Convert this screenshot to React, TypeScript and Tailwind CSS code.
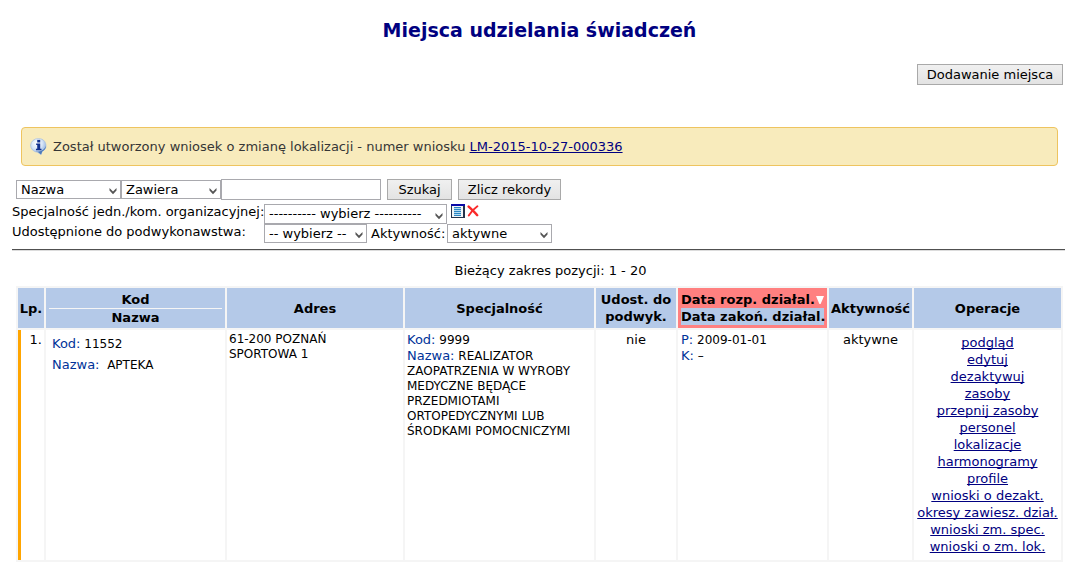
import type { ReactNode } from "react";

const operations = [
  "podgląd",
  "edytuj",
  "dezaktywuj",
  "zasoby",
  "przepnij zasoby",
  "personel",
  "lokalizacje",
  "harmonogramy",
  "profile",
  "wnioski o dezakt.",
  "okresy zawiesz. dział.",
  "wnioski zm. spec.",
  "wnioski o zm. lok.",
];

const linkClass = "text-[#000080] underline [text-decoration-skip-ink:none]";
const buttonClass =
  "h-[21px] border border-[#a9a9a9] bg-linear-to-b from-[#f0f0f0] to-[#e3e3e3] text-center leading-4";

type SelectProps = {
  id?: string;
  label?: string;
  options: string[];
  className: string;
};

function Select({ id, label, options, className }: SelectProps) {
  return (
    <span className={`relative inline-flex shrink-0 ${className}`}>
      <select
        id={id}
        aria-label={label}
        className="h-full w-full appearance-none border border-[#a9a9ae] bg-white pl-1 leading-4"
      >
        {options.map((option) => (
          <option key={option}>{option}</option>
        ))}
      </select>
      <svg className="pointer-events-none absolute right-1 bottom-1 h-2 w-2" viewBox="0 0 8 8">
        <path d="M0.5 1 L4 4.5 L7.5 1 V3.6 L4 7.2 L0.5 3.6 Z" fill="#555" />
      </svg>
    </span>
  );
}

function InfoIcon() {
  return (
    <svg className="h-[17px] w-[17px] shrink-0" viewBox="0 0 16 16" aria-hidden="true">
      <defs>
        <radialGradient id="bubble" cx="0.4" cy="0.3" r="0.75">
          <stop offset="0" stopColor="#ffffff" />
          <stop offset="0.5" stopColor="#d5e3f6" />
          <stop offset="1" stopColor="#7fa4d8" />
        </radialGradient>
      </defs>
      <path
        d="M8 0.6a7 6.4 0 0 1 3.4 12L10.4 15.6 7.2 13.4A7 6.4 0 0 1 8 0.6z"
        fill="url(#bubble)"
        stroke="#a9bfe0"
        strokeWidth="0.7"
      />
      <path d="M5 12.8C10 13.4 13.6 11.4 15 7.4C15 10 13.6 11.8 11.5 12.7L10.4 15.6 7.8 13.4z" fill="#4d79b8" />
      <path d="M6.8 1.8h2.8v2.4H6.8z" fill="#12308f" />
      <path d="M5.8 5.2h3.8v4.8h1.2v1.6H5.6V10h1.2V6.6h-1z" fill="#12308f" />
    </svg>
  );
}

function ListIcon() {
  return (
    <svg className="h-3.5 w-3.5" viewBox="0 0 14 14" shapeRendering="crispEdges" aria-hidden="true">
      <path d="M0 0h14v14H0z" fill="#22344c" />
      <path d="M0 0h14v2H0z" fill="#0a0aa8" />
      <path d="M1 2h11v11H1z" fill="#f2f6f8" />
      <path d="M3 3h7v9H3z" fill="#b4dcf0" />
      <path d="M3 3h7v1H3zM3 5h7v1H3zM3 7h7v1H3zM3 9h7v1H3zM3 11h7v1H3z" fill="#2a86c4" />
    </svg>
  );
}

function ClearIcon() {
  return (
    <svg className="h-3 w-3" viewBox="0 0 12 12" aria-hidden="true">
      <path d="M1.6 1.6C4 3.8 7.5 7 10.2 10.2" stroke="#fa2a2a" strokeWidth="2.4" fill="none" strokeLinecap="round" />
      <path d="M10.4 1.2C7 3.6 4 7 1.8 10.4" stroke="#fa2a2a" strokeWidth="1.9" fill="none" strokeLinecap="round" />
    </svg>
  );
}

function Label({ children }: { children: ReactNode }) {
  return <span className="inline-block text-[13px] leading-4 text-[#003399]">{children}</span>;
}

export default function App() {
  return (
    <main className="bg-white pr-3.5 pb-2 pl-3 font-['DejaVu_Sans',Verdana,sans-serif] text-[13px] text-black">
      <h1 className="pt-4 pl-0.5 text-center text-[19px] leading-7 font-bold text-[#000080]">
        Miejsca udzielania świadczeń
      </h1>

      <div className="mt-5 mr-0.5 flex justify-end">
        <button type="button" className={`${buttonClass} w-[146px]`}>
          Dodawanie miejsca
        </button>
      </div>

      <div className="mt-[42px] mr-[7px] ml-[9px] flex h-[39px] items-center gap-1.5 rounded-[4px] border border-[#eec45f] bg-[#f8ebbc] pl-2 text-[#363636]">
        <InfoIcon />
        <p>
          Został utworzony wniosek o zmianę lokalizacji - numer wniosku{" "}
          <a href="#wniosek" className={linkClass}>
            LM-2015-10-27-000336
          </a>
        </p>
      </div>

      <form className="mt-[13px]" onSubmit={(e) => e.preventDefault()}>
        <div className="flex items-center pl-1">
          <Select label="Pole" options={["Nazwa", "Kod"]} className="h-[19px] w-[105px]" />
          <Select label="Warunek" options={["Zawiera", "Równe"]} className="h-[19px] w-[100px]" />
          <input type="text" aria-label="Szukana wartość" className="h-[21px] w-40 border border-[#a9a9ae] px-1" />
          <button type="submit" className={`${buttonClass} ml-1.5 w-[65px]`}>
            Szukaj
          </button>
          <button type="button" className={`${buttonClass} ml-1.5 w-[103px]`}>
            Zlicz rekordy
          </button>
        </div>

        <div className="mt-1 flex items-start">
          <label htmlFor="specjalnosc" className="w-[252px] shrink-0 leading-4 whitespace-nowrap">
            Specjalność jedn./kom. organizacyjnej:
          </label>
          <Select
            id="specjalnosc"
            options={["---------- wybierz ----------"]}
            className="h-5 w-[183px]"
          />
          <button type="button" aria-label="Wybierz z listy" className="ml-1">
            <ListIcon />
          </button>
          <button type="button" aria-label="Wyczyść" className="ml-0.5 pt-px">
            <ClearIcon />
          </button>
        </div>

        <div className="flex items-start">
          <label htmlFor="podwykonawstwo" className="w-[252px] shrink-0 leading-4 whitespace-nowrap">
            Udostępnione do podwykonawstwa:
          </label>
          <Select id="podwykonawstwo" options={["-- wybierz --", "tak", "nie"]} className="h-[19px] w-[103px]" />
          <label htmlFor="aktywnosc" className="ml-1 w-[76px] shrink-0 leading-[19px]">
            Aktywność:
          </label>
          <Select id="aktywnosc" options={["aktywne", "nieaktywne"]} className="h-[19px] w-[105px]" />
        </div>
      </form>

      <hr className="mt-1.5 border-t border-b border-t-[#505050] border-b-[#dcdcdc]" />

      <p className="mt-2.5 pl-6 text-center leading-5">Bieżący zakres pozycji: 1 - 20</p>

      <div className="mt-[5px] mr-0.5 ml-1">
        <table className="w-full table-fixed border-separate border-spacing-0.5 bg-[#f5f5f5]">
          <colgroup>
            <col className="w-[26px]" />
            <col className="w-[179px]" />
            <col className="w-[176px]" />
            <col />
            <col className="w-20" />
            <col className="w-[149px]" />
            <col className="w-[83px]" />
            <col className="w-[147px]" />
          </colgroup>
          <thead>
            <tr className="h-10 bg-[#b4c9e8] leading-[17px]">
              <th className="p-0">Lp.</th>
              <th className="px-[3px] py-0.5">
                <div className="border-b border-[#f5f5f5]">Kod</div>
                <div>Nazwa</div>
              </th>
              <th className="p-0">Adres</th>
              <th className="p-0">Specjalność</th>
              <th className="p-0">
                Udost. do
                <br />
                podwyk.
              </th>
              <th className="bg-[#ff8080] p-[3px] whitespace-nowrap">
                <div className="flex items-center justify-between">
                  Data rozp. działal.
                  <svg className="h-2 w-2" viewBox="0 0 8 8" aria-hidden="true">
                    <path d="M0 0h8L4.6 8H3.4z" fill="#fff" />
                  </svg>
                </div>
                <div className="bg-[#b4c9e8]">Data zakoń. działal.</div>
              </th>
              <th className="p-0">Aktywność</th>
              <th className="p-0">Operacje</th>
            </tr>
          </thead>
          <tbody>
            <tr className="bg-white align-top text-[12px] leading-[15px] [&>td]:py-0.5">
              <td className="border-l-[3px] border-[#ffa500] pr-0.5 text-right text-[13px]">1.</td>
              <td className="px-1.5">
                <div className="pt-1">
                  <Label>Kod:</Label> 11552
                </div>
                <div className="pt-[5px]">
                  <Label>Nazwa:</Label>&nbsp; APTEKA
                </div>
              </td>
              <td className="px-0.5">
                61-200 POZNAŃ
                <br />
                SPORTOWA 1
              </td>
              <td className="px-0.5">
                <div>
                  <Label>Kod:</Label> 9999
                </div>
                <div>
                  <Label>Nazwa:</Label> REALIZATOR ZAOPATRZENIA W WYROBY MEDYCZNE BĘDĄCE PRZEDMIOTAMI
                  ORTOPEDYCZNYMI LUB ŚRODKAMI POMOCNICZYMI
                </div>
              </td>
              <td className="text-center text-[13px]">nie</td>
              <td className="px-[3px]">
                <div>
                  <Label>P:</Label> 2009-01-01
                </div>
                <div>
                  <Label>K:</Label> –
                </div>
              </td>
              <td className="text-center text-[13px]">aktywne</td>
              <td>
                <ul className="pt-0.5 pb-[3px] text-center text-[13px] leading-[17px] whitespace-nowrap">
                  {operations.map((name) => (
                    <li key={name}>
                      <a href="#operacja" className={linkClass}>
                        {name}
                      </a>
                    </li>
                  ))}
                </ul>
              </td>
            </tr>
          </tbody>
        </table>
      </div>
    </main>
  );
}
